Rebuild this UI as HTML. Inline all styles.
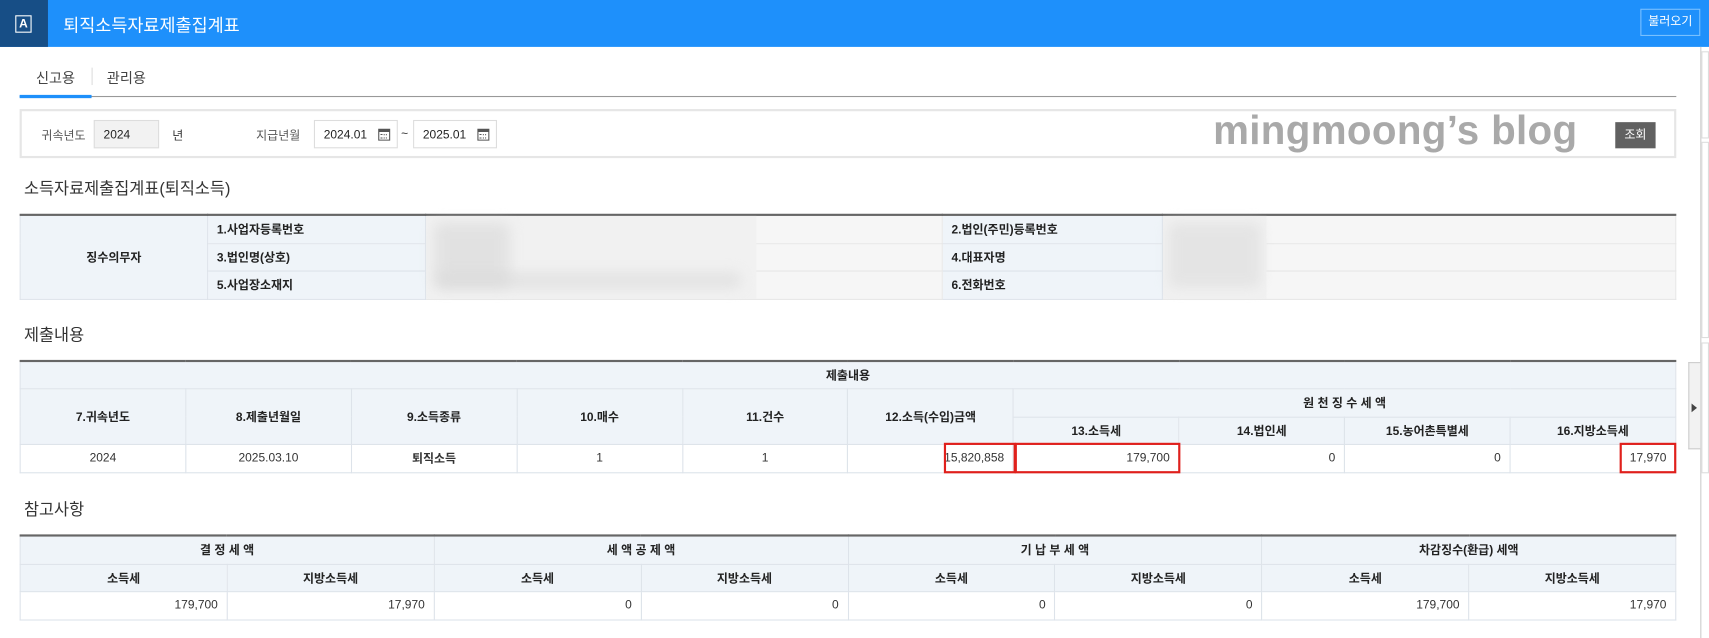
<!DOCTYPE html>
<html><head><meta charset="utf-8"><style>
*{box-sizing:border-box;margin:0;padding:0}
html,body{width:1709px;height:638px;overflow:hidden;background:#fff}
#w{position:absolute;left:0;top:0;width:1568px;height:585px;transform:scale(1.08992,1.0906);transform-origin:0 0;font-family:"Liberation Sans","Noto Sans CJK KR",sans-serif;color:#333}
.a{position:absolute}
.hd{left:0;top:0;width:1568px;height:43px;background:#1e90fb}
.logo{left:0;top:0;width:44px;height:43px;background:#174e86}
.logo span{position:absolute;left:14px;top:14px;width:15px;height:16px;border:1.5px solid #fff;color:#fff;font-size:11px;line-height:14px;text-align:center;font-weight:bold}
.title{left:58px;top:10px;color:#fff;font-size:16px}
.btn1{left:1505px;top:8px;width:55px;height:25px;border:1px solid #7ac0ff;color:#fff;font-size:11px;text-align:center;line-height:23px}
.tab{top:61px;font-size:13px;color:#444}
table{position:absolute;border-collapse:collapse;table-layout:fixed;font-size:11px}
td{border:1px solid #dde3ea;text-align:center;font-weight:bold;color:#222;background:#eff4f9;overflow:hidden;white-space:nowrap}
td.v{background:#fff;font-weight:normal;color:#333;text-align:right;padding-right:8px}
td.c{text-align:center;padding:0}
td.g{background:#f6f6f6;border-color:#e6e6e6}
.top{border-top:2px solid #666}
.sec{font-size:15px;color:#333;left:22px}
.inp{height:26px;border:1px solid #ddd;font-size:11px;line-height:26px;padding-left:8px;color:#222}
.cal{position:absolute;right:6px;top:7px;width:11px;height:11px;border:1.5px solid #555;border-top-width:3px}
.cal:after{content:"";position:absolute;left:1px;top:2px;width:6px;height:2px;border-top:1px dotted #555;border-bottom:1px dotted #555}
.red{border:2px solid #e0201c}
.blur{position:absolute;background:#d8d8d8;filter:blur(6px);border-radius:6px}
</style></head><body><div id="w">
<div class="a hd"></div>
<div class="a logo"><span>A</span></div>
<div class="a title">퇴직소득자료제출집계표</div>
<div class="a btn1">불러오기</div>

<div class="a tab" style="left:33px">신고용</div>
<div class="a" style="left:84px;top:62px;width:1px;height:16px;background:#ddd"></div>
<div class="a tab" style="left:98px">관리용</div>
<div class="a" style="left:18px;top:88px;width:1520px;height:1px;background:#999"></div>
<div class="a" style="left:18px;top:87px;width:66px;height:3px;background:#1e90fb"></div>

<div class="a" style="left:18px;top:100px;width:1520px;height:45px;border:2px solid #e6e6e6"></div>
<div class="a" style="left:38px;top:116px;font-size:11px;color:#555">귀속년도</div>
<div class="a inp" style="left:86px;top:110px;width:60px;background:#f2f2f2">2024</div>
<div class="a" style="left:158px;top:116px;font-size:11px">년</div>
<div class="a" style="left:235px;top:116px;font-size:11px;color:#555">지급년월</div>
<div class="a inp" style="left:288px;top:110px;width:77px">2024.01<i class="cal"></i></div>
<div class="a" style="left:368px;top:117px;font-size:11px">~</div>
<div class="a inp" style="left:379px;top:110px;width:77px">2025.01<i class="cal"></i></div>
<div class="a" style="left:1113px;top:99px;font-size:37px;font-weight:bold;color:#a9a9a9;letter-spacing:0.3px">mingmoong’s blog</div>
<div class="a" style="left:1482px;top:112px;width:37px;height:24px;background:#616161;color:#fff;font-size:11px;text-align:center;line-height:24px">조회</div>

<div class="a sec" style="top:162px">소득자료제출집계표(퇴직소득)</div>
<table class="top" style="left:18px;top:196px;width:1520px">
<colgroup><col style="width:172px"><col style="width:200px"><col style="width:474px"><col style="width:202px"><col></colgroup>
<tr style="height:26px"><td rowspan="3">징수의무자</td><td style="text-align:left;padding-left:8px">1.사업자등록번호</td><td class="g"></td><td style="text-align:left;padding-left:8px">2.법인(주민)등록번호</td><td class="g"></td></tr>
<tr style="height:25px"><td style="text-align:left;padding-left:8px">3.법인명(상호)</td><td class="g"></td><td style="text-align:left;padding-left:8px">4.대표자명</td><td class="g"></td></tr>
<tr style="height:26px"><td style="text-align:left;padding-left:8px">5.사업장소재지</td><td class="g"></td><td style="text-align:left;padding-left:8px">6.전화번호</td><td class="g"></td></tr>
</table>
<div class="a" style="left:391px;top:198px;width:303px;height:76px;background:#f1f1f1"></div>
<div class="blur" style="left:398px;top:204px;width:70px;height:60px;opacity:.6"></div>
<div class="blur" style="left:400px;top:250px;width:280px;height:14px;opacity:.6"></div>
<div class="a" style="left:1067px;top:198px;width:95px;height:76px;background:#f1f1f1"></div>
<div class="blur" style="left:1072px;top:204px;width:85px;height:60px;opacity:.5"></div>

<div class="a sec" style="top:296px">제출내용</div>
<table class="top" style="left:18px;top:330px;width:1520px">
<tr style="height:25px"><td colspan="10">제출내용</td></tr>
<tr style="height:26px"><td rowspan="2">7.귀속년도</td><td rowspan="2">8.제출년월일</td><td rowspan="2">9.소득종류</td><td rowspan="2">10.매수</td><td rowspan="2">11.건수</td><td rowspan="2">12.소득(수입)금액</td><td colspan="4">원 천 징 수 세 액</td></tr>
<tr style="height:25px"><td>13.소득세</td><td>14.법인세</td><td>15.농어촌특별세</td><td>16.지방소득세</td></tr>
<tr style="height:26px"><td class="v c">2024</td><td class="v c">2025.03.10</td><td class="v c" style="font-weight:bold">퇴직소득</td><td class="v c">1</td><td class="v c">1</td><td class="v">15,820,858</td><td class="v">179,700</td><td class="v">0</td><td class="v">0</td><td class="v">17,970</td></tr>
</table>
<div class="a red" style="left:866px;top:406px;width:66px;height:28px"></div>
<div class="a red" style="left:931px;top:406px;width:152px;height:28px"></div>
<div class="a red" style="left:1486px;top:406px;width:52px;height:28px"></div>

<div class="a sec" style="top:456px">참고사항</div>
<table class="top" style="left:18px;top:490px;width:1520px">
<tr style="height:26px"><td colspan="2">결 정 세 액</td><td colspan="2">세 액 공 제 액</td><td colspan="2">기 납 부 세 액</td><td colspan="2">차감징수(환급) 세액</td></tr>
<tr style="height:25px"><td>소득세</td><td>지방소득세</td><td>소득세</td><td>지방소득세</td><td>소득세</td><td>지방소득세</td><td>소득세</td><td>지방소득세</td></tr>
<tr style="height:26px"><td class="v">179,700</td><td class="v">17,970</td><td class="v">0</td><td class="v">0</td><td class="v">0</td><td class="v">0</td><td class="v">179,700</td><td class="v">17,970</td></tr>
</table>

<div class="a" style="left:1560px;top:43px;width:1px;height:542px;background:#ccc"></div>
<div class="a" style="left:1561px;top:47px;width:7px;height:80px;border:1px solid #ddd"></div>
<div class="a" style="left:1561px;top:130px;width:7px;height:180px;border:1px solid #ddd"></div>
<div class="a" style="left:1561px;top:314px;width:7px;height:120px;border:1px solid #ddd"></div>
<div class="a" style="left:1549px;top:332px;width:11px;height:80px;background:#f2f2f2;border:1px solid #ccc;border-right:none"></div>
<div class="a" style="left:1552px;top:370px;width:0;height:0;border-left:5px solid #444;border-top:4px solid transparent;border-bottom:4px solid transparent"></div>
</div></body></html>
